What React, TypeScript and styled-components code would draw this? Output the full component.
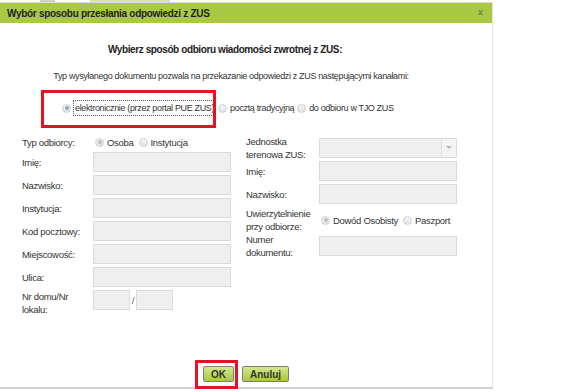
import React from "react";
import styled, { createGlobalStyle } from "styled-components";

const GlobalStyle = createGlobalStyle`
    html, body {
        margin: 0;
        padding: 0;
        background: #ffffff;
    }
    body {
        font-family: "Liberation Sans", Arial, sans-serif;
        color: #333333;
    }
`;

const FONT = `"Liberation Sans", Arial, sans-serif`;

const App: React.FunctionComponent = () => {
    return (
        <Page>
            <GlobalStyle />
            <BackStrip />
            <Dialog>
                <TitleBar>
                    <TitleText>Wybór sposobu przesłania odpowiedzi z ZUS</TitleText>
                    <CloseX>x</CloseX>
                </TitleBar>
                <Body>
                    <Heading>
                        Wybierz sposób odbioru wiadomości zwrotnej z ZUS:
                    </Heading>
                    <SubText>
                        Typ wysyłanego dokumentu pozwala na przekazanie
                        odpowiedzi z ZUS następującymi kanałami:
                    </SubText>
                    <ChannelRow>
                        <Option>
                            <Radio checked active />
                            <FocusLabel>
                                elektronicznie (przez portal PUE ZUS)
                            </FocusLabel>
                        </Option>
                        <Option>
                            <Radio />
                            <span>pocztą tradycyjną</span>
                        </Option>
                        <Option>
                            <Radio />
                            <span>do odbioru w TJO ZUS</span>
                        </Option>
                    </ChannelRow>

                    <FormGrid>
                        <LeftColumn>
                            <Label>Typ odbiorcy:</Label>
                            <RadioGroup>
                                <Option>
                                    <Radio checked />
                                    <span>Osoba</span>
                                </Option>
                                <Option>
                                    <Radio />
                                    <span>Instytucja</span>
                                </Option>
                            </RadioGroup>
                            <Label>Imię:</Label>
                            <Input />
                            <Label>Nazwisko:</Label>
                            <Input />
                            <Label>Instytucja:</Label>
                            <Input />
                            <Label>Kod pocztowy:</Label>
                            <Input />
                            <Label>Miejscowość:</Label>
                            <Input />
                            <Label>Ulica:</Label>
                            <Input />
                            <Label top>
                                Nr domu/Nr
                                <br />
                                lokalu:
                            </Label>
                            <HouseRow>
                                <Input width={37} />
                                <Slash>/</Slash>
                                <Input width={37} />
                            </HouseRow>
                        </LeftColumn>

                        <RightColumn>
                            <Label>
                                Jednostka
                                <br />
                                terenowa ZUS:
                            </Label>
                            <Select>
                                <SelectArrow>
                                    <svg width="6" height="4" viewBox="0 0 6 4">
                                        <path d="M0 0 L6 0 L3 3 Z" fill="#b5b5b5" />
                                    </svg>
                                </SelectArrow>
                            </Select>
                            <Label>Imię:</Label>
                            <Input />
                            <Label>Nazwisko:</Label>
                            <Input />
                            <Label>
                                Uwierzytelnienie
                                <br />
                                przy odbiorze:
                            </Label>
                            <RadioGroup>
                                <Option>
                                    <Radio checked />
                                    <span>Dowód Osobisty</span>
                                </Option>
                                <Option>
                                    <Radio />
                                    <span>Paszport</span>
                                </Option>
                            </RadioGroup>
                            <Label>
                                Numer
                                <br />
                                dokumentu:
                            </Label>
                            <Input />
                        </RightColumn>
                    </FormGrid>

                    <ButtonBar>
                        <Button>OK</Button>
                        <Button>Anuluj</Button>
                    </ButtonBar>
                </Body>
                <Highlight style={{ left: 41, top: 87, width: 175, height: 38 }} />
                <Highlight style={{ left: 195, top: 357, width: 43, height: 29 }} />
            </Dialog>
        </Page>
    );
};

export default App;

// Styled-component

const Page = styled.div`
    position: relative;
    width: 573px;
    height: 392px;
    overflow: hidden;
    background: #ffffff;
    font-family: ${FONT};
`;

const BackStrip = styled.div`
    height: 2px;
    background: linear-gradient(
        to right,
        #ffffff 0px,
        #ffffff 40px,
        #cfcfcf 40px,
        #cfcfcf 55px,
        #ffffff 55px,
        #ffffff 90px,
        #d6e6a6 90px,
        #d6e6a6 170px,
        #ffffff 170px
    );
`;

const Dialog = styled.div`
    position: relative;
    width: 493px;
    height: 387px;
    display: flex;
    flex-direction: column;
    background: #ffffff;
    border-right: 1px solid #e3e3e3;
    border-bottom: 2px solid #d2d2d2;
    box-sizing: border-box;
    border-top: 1px solid #dcdcdc;
`;

const TitleBar = styled.div`
    display: flex;
    align-items: center;
    justify-content: space-between;
    height: 20px;
    padding: 0 9px 0 7px;
    background: #a9c943;
    flex: none;
`;

const TitleText = styled.span`
    font-size: 10px;
    font-weight: 700;
    color: #1f1f1f;
    letter-spacing: -0.3px;
`;

const CloseX = styled.span`
    font-size: 9px;
    font-weight: 700;
    color: #6f7f5a;
    margin-top: -3px;
`;

const Body = styled.div`
    flex: 1;
    display: flex;
    flex-direction: column;
    font-size: 9.5px;
    letter-spacing: -0.3px;
    line-height: 13px;
    color: #333333;
`;

const Heading = styled.div`
    margin-top: 20px;
    padding-right: 42px;
    text-align: center;
    font-size: 10px;
    font-weight: 700;
    letter-spacing: -0.4px;
    line-height: 14px;
    color: #222222;
`;

const SubText = styled.div`
    margin-top: 12px;
    padding-right: 30px;
    text-align: center;
    font-size: 9px;
    line-height: 14px;
    letter-spacing: -0.35px;
`;

const ChannelRow = styled.div`
    margin-top: 18px;
    display: flex;
    align-items: center;
    gap: 3px;
    padding-left: 62px;
    font-size: 9px;
    letter-spacing: -0.35px;
    line-height: 14px;
`;

const Option = styled.label`
    display: inline-flex;
    align-items: center;
    gap: 3px;
    white-space: nowrap;
`;

const Radio = styled.span<{ checked?: boolean; active?: boolean }>`
    position: relative;
    width: 9px;
    height: 9px;
    flex: none;
    box-sizing: border-box;
    border-radius: 50%;
    border: 1px solid #cfcfcf;
    background: linear-gradient(#f6f6f6, #e2e2e2);

    &::after {
        content: "";
        display: ${(p) => (p.checked ? "block" : "none")};
        position: absolute;
        left: 1.5px;
        top: 1.5px;
        width: 4px;
        height: 4px;
        border-radius: 50%;
        background: ${(p) => (p.active ? "#8fa6c4" : "#bdbdbd")};
    }
`;

const FocusLabel = styled.span`
    outline: 1px dotted #555555;
    outline-offset: 0px;
    padding: 0 1px;
`;

const FormGrid = styled.div`
    margin-top: 20px;
    display: flex;
    align-items: flex-start;
    gap: 15px;
    padding-left: 22px;
`;

const LeftColumn = styled.div`
    display: grid;
    grid-template-columns: 71px 138px;
    grid-template-rows: 14px repeat(7, 20px);
    row-gap: 3px;
    align-items: center;
`;

const RightColumn = styled.div`
    margin-top: 3px;
    display: grid;
    grid-template-columns: 73px 138px;
    grid-template-rows: 20px 20px 20px 26px 20px;
    row-gap: 3px;
    align-items: center;
`;

const Label = styled.div<{ top?: boolean }>`
    align-self: ${(p) => (p.top ? "start" : "center")};
    white-space: nowrap;
    line-height: 13px;
`;

const RadioGroup = styled.div`
    display: flex;
    align-items: center;
    gap: 5px;
    padding-left: 2px;
`;

const Input = styled.div<{ width?: number }>`
    width: ${(p) => (p.width ? `${p.width}px` : "100%")};
    height: 20px;
    box-sizing: border-box;
    background: #efefef;
    border: 1px solid #dadada;
`;

const HouseRow = styled.div`
    display: flex;
    align-items: center;
`;

const Slash = styled.span`
    width: 6px;
    text-align: center;
    color: #555555;
`;

const Select = styled.div`
    height: 20px;
    box-sizing: border-box;
    display: flex;
    justify-content: flex-end;
    background: #efefef;
    border: 1px solid #dadada;
`;

const SelectArrow = styled.div`
    width: 14px;
    display: flex;
    align-items: center;
    justify-content: center;
    border-left: 1px solid #dedede;
    background: #f3f3f3;
`;

const ButtonBar = styled.div`
    margin-top: auto;
    margin-bottom: 5px;
    display: flex;
    justify-content: center;
    gap: 8px;
`;

const Button = styled.button`
    height: 16px;
    padding: 0 7px;
    box-sizing: border-box;
    border: 1px solid #7d7d7d;
    border-radius: 2px;
    background: linear-gradient(#d6e88f, #a9c643);
    font-family: ${FONT};
    font-size: 10px;
    font-weight: 700;
    line-height: 13px;
    color: #333333;
    min-width: 28px;
`;

const Highlight = styled.div`
    position: absolute;
    box-sizing: border-box;
    border: 3px solid #e3141f;
    pointer-events: none;
`;
